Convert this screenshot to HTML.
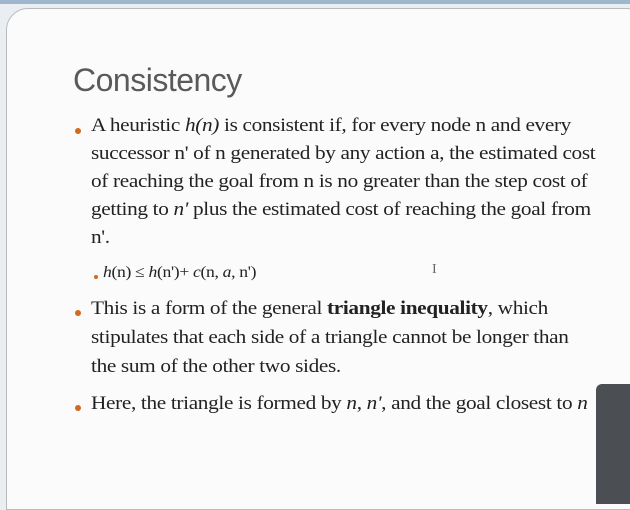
<!DOCTYPE html>
<html><head><style>
body{margin:0;width:630px;height:494px;overflow:hidden;background:#e9eef3;position:relative;font-family:"Liberation Serif",serif;}
.top{position:absolute;left:0;top:0;width:630px;height:4px;background:#9fb6cf;}
.card{position:absolute;left:6px;top:8px;width:640px;height:500px;background:#fbfbfb;border:1px solid #b9b9b9;border-radius:22px 22px 0 0;}
h1{position:absolute;left:73px;top:62px;margin:0;font:32px "Liberation Sans",sans-serif;color:#5a5a5a;letter-spacing:-0.5px;}
.l{position:absolute;left:91px;font-size:18.5px;color:#222;white-space:nowrap;letter-spacing:-0.3px;transform:scaleX(1.15);transform-origin:0 0;}
.b{position:absolute;width:6px;height:6px;border-radius:50%;background:#d2691e;}
.dark{position:absolute;left:596px;top:384px;width:40px;height:120px;background:#4b4e52;border-radius:6px 0 0 0;}
i{font-style:italic;}
</style></head><body>
<div class="top"></div>
<div class="card"></div>
<h1>Consistency</h1>
<div class="b" style="left:75px;top:128px"></div>
<div class="l" style="top:116px">A heuristic <i>h(n)</i> is consistent if, for every node n and every</div>
<div class="l" style="top:144px">successor n' of n generated by any action a, the estimated cost</div>
<div class="l" style="top:172px">of reaching the goal from n is no greater than the step cost of</div>
<div class="l" style="top:200px">getting to <i>n'</i> plus the estimated cost of reaching the goal from</div>
<div class="l" style="top:228px">n'.</div>
<div class="b" style="left:94px;top:275px;width:4px;height:4px"></div>
<div class="l" style="left:103px;top:264px;font-size:16px;transform:scaleX(1.1)"><i>h</i>(n) ≤ <i>h</i>(n')+ <i>c</i>(n, <i>a</i>, n')</div>
<div class="l" style="left:432px;top:262px;font-size:14px;color:#666;transform:none">I</div>
<div class="b" style="left:75px;top:310px"></div>
<div class="l" style="top:299px">This is a form of the general <b>triangle inequality</b>, which</div>
<div class="l" style="top:328px">stipulates that each side of a triangle cannot be longer than</div>
<div class="l" style="top:357px">the sum of the other two sides.</div>
<div class="b" style="left:75px;top:405px"></div>
<div class="l" style="top:394px">Here, the triangle is formed by <i>n</i>, <i>n'</i>, and the goal closest to <i>n</i></div>
<div class="dark"></div>
</body></html>
